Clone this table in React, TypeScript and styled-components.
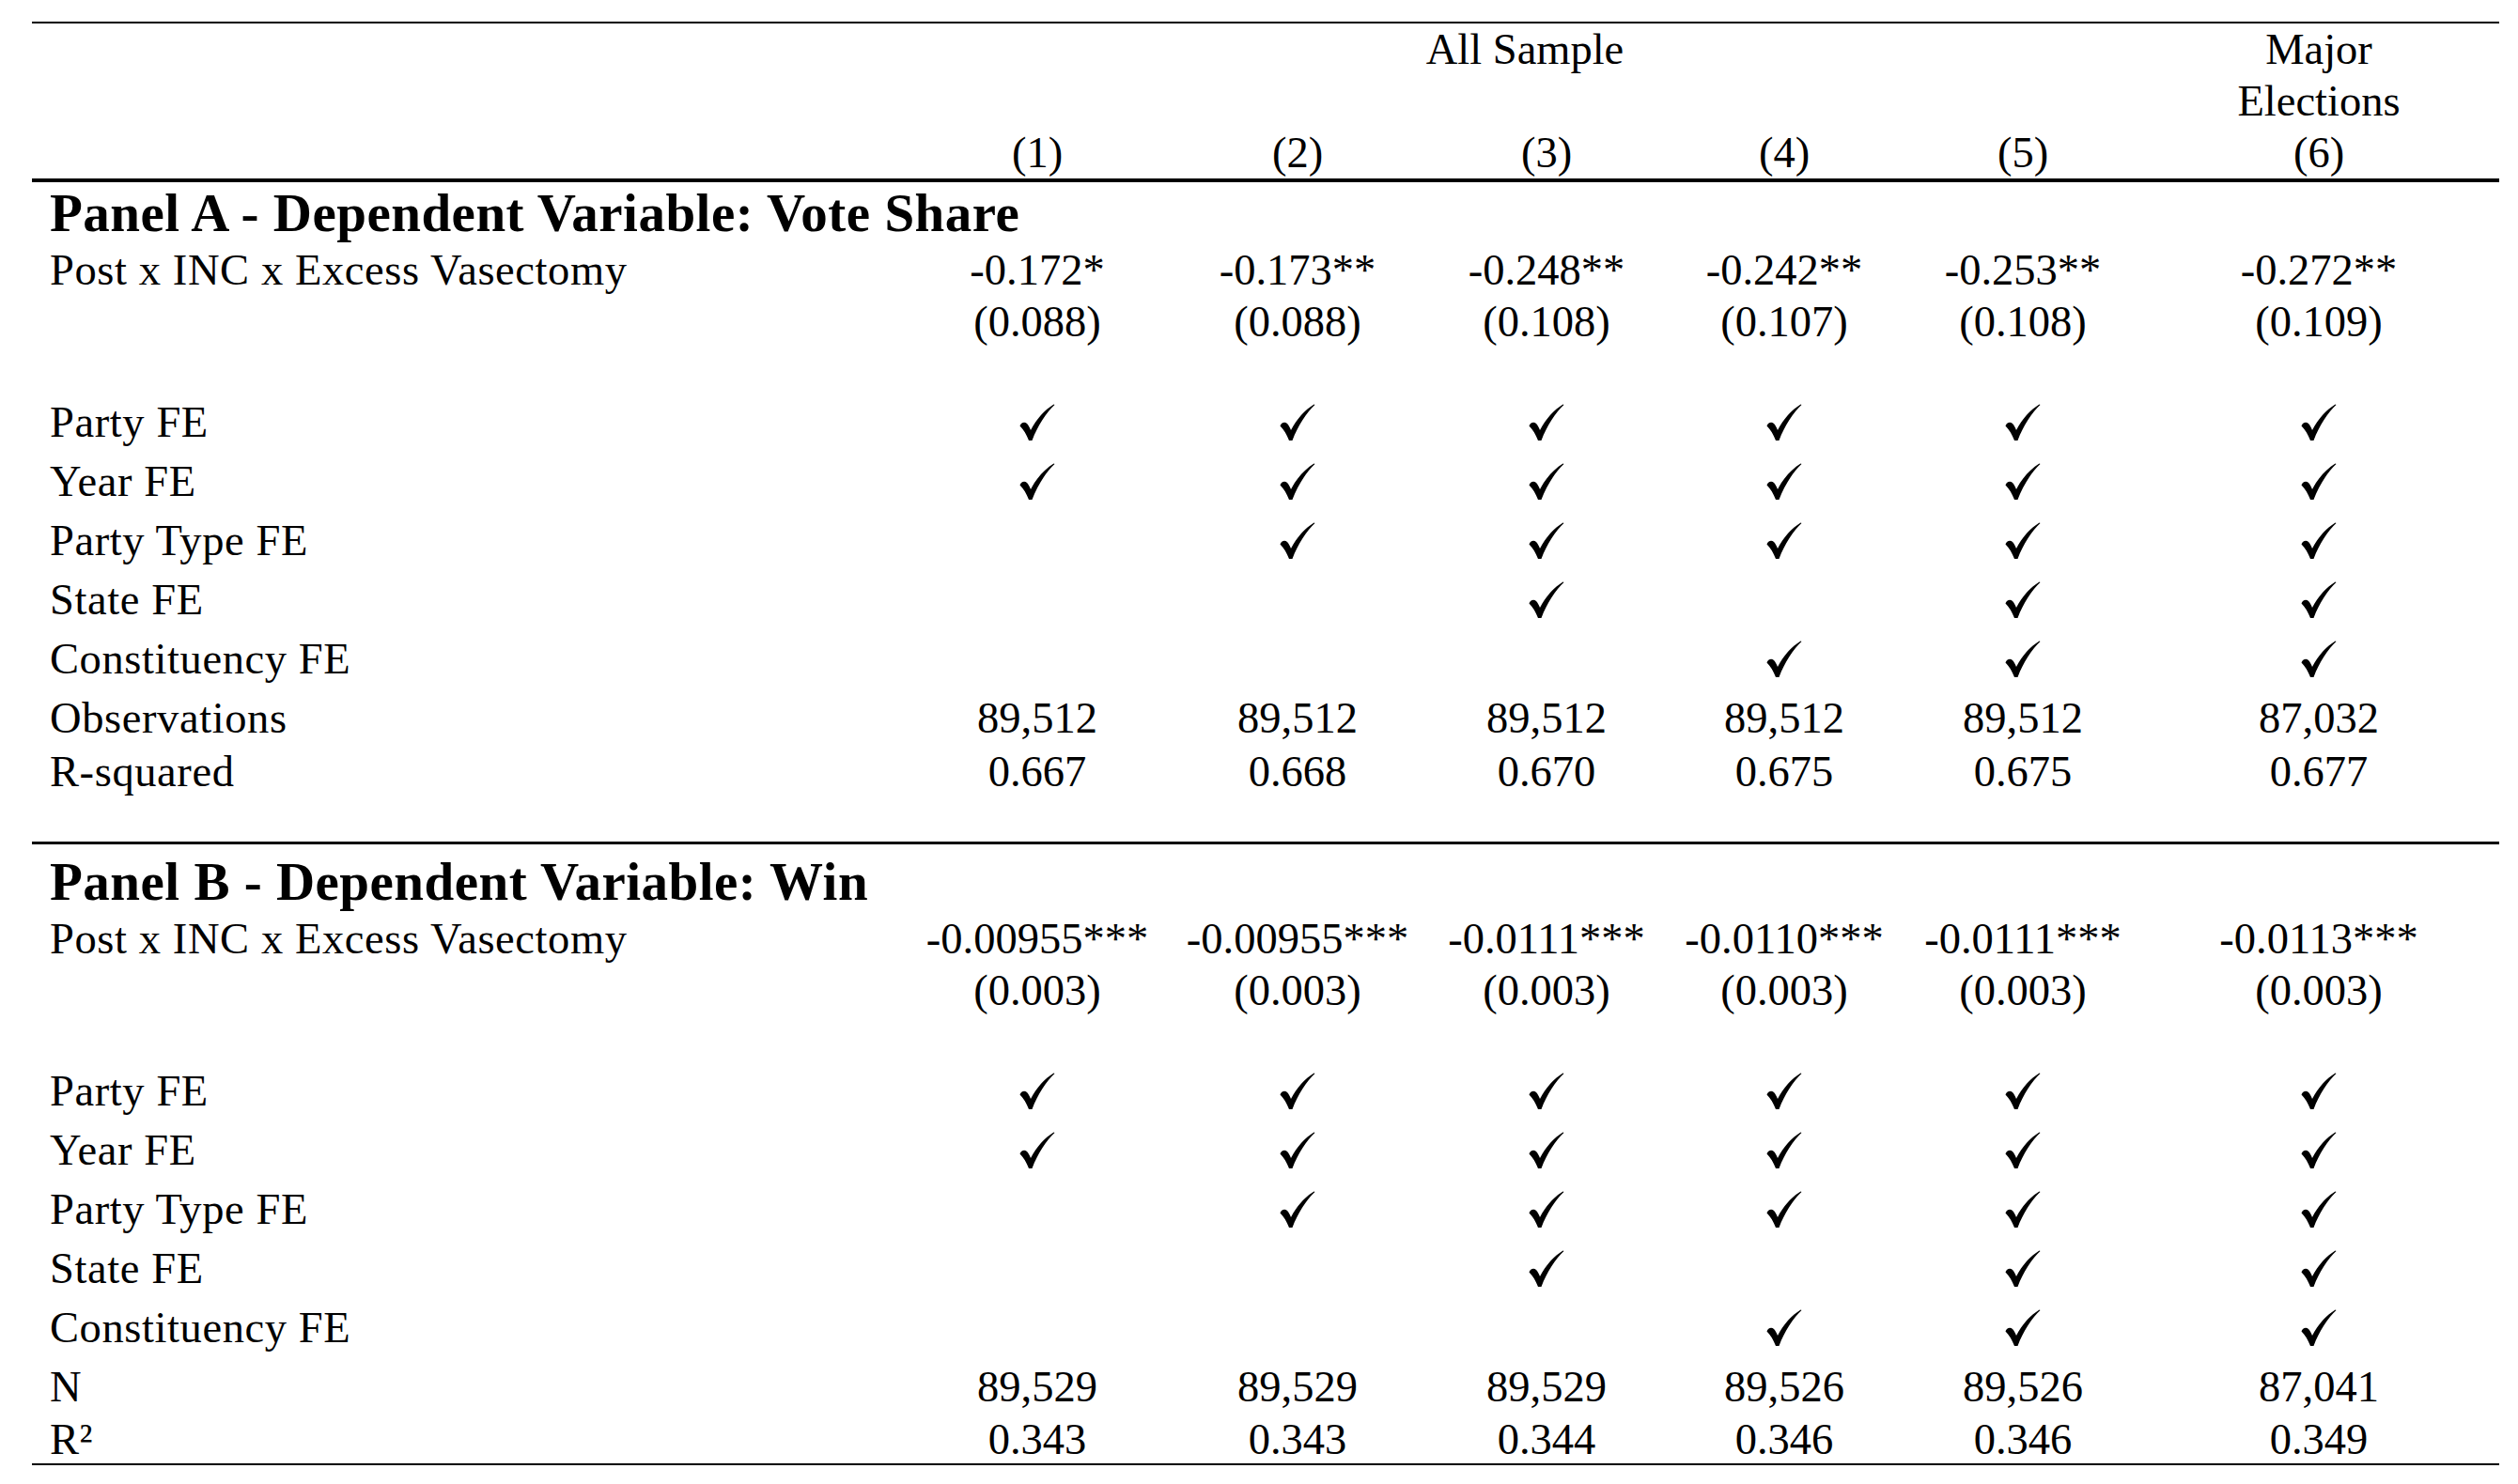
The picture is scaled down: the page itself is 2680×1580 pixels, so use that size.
import React from "react";
import styled, { createGlobalStyle, css } from "styled-components";

const COLUMNS = "936px 268px 286px 244px 262px 246px 384px";

type PanelData = {
    title: string;
    coef: string[];
    se: string[];
    nLabel: string;
    n: string[];
    r2Label: string;
    r2: string[];
};

const FIXED_EFFECTS: { label: string; cols: number[] }[] = [
    { label: "Party FE", cols: [1, 2, 3, 4, 5, 6] },
    { label: "Year FE", cols: [1, 2, 3, 4, 5, 6] },
    { label: "Party Type FE", cols: [2, 3, 4, 5, 6] },
    { label: "State FE", cols: [3, 5, 6] },
    { label: "Constituency FE", cols: [4, 5, 6] },
];

const PANELS: PanelData[] = [
    {
        title: "Panel A - Dependent Variable: Vote Share",
        coef: ["-0.172*", "-0.173**", "-0.248**", "-0.242**", "-0.253**", "-0.272**"],
        se: ["(0.088)", "(0.088)", "(0.108)", "(0.107)", "(0.108)", "(0.109)"],
        nLabel: "Observations",
        n: ["89,512", "89,512", "89,512", "89,512", "89,512", "87,032"],
        r2Label: "R-squared",
        r2: ["0.667", "0.668", "0.670", "0.675", "0.675", "0.677"],
    },
    {
        title: "Panel B - Dependent Variable: Win",
        coef: ["-0.00955***", "-0.00955***", "-0.0111***", "-0.0110***", "-0.0111***", "-0.0113***"],
        se: ["(0.003)", "(0.003)", "(0.003)", "(0.003)", "(0.003)", "(0.003)"],
        nLabel: "N",
        n: ["89,529", "89,529", "89,529", "89,526", "89,526", "87,041"],
        r2Label: "R²",
        r2: ["0.343", "0.343", "0.344", "0.346", "0.346", "0.349"],
    },
];

const COLS = [1, 2, 3, 4, 5, 6];

const Check = () => (
    <svg width="40" height="40" viewBox="0 0 40 40">
        <path
            d="M38.5 1 C30 9 20.5 23 14.5 39 L11 39 C8.5 32.5 5.5 27.5 1.5 23.5 C2.5 20 6.5 18.5 9 21 C10.5 22.5 11.8 25 13 28 C19.5 15.5 28 6.5 37.5 0.5 Z"
            fill="#000"
        />
    </svg>
);

const Panel: React.FC<{ data: PanelData; divided?: boolean; last?: boolean }> = ({ data, divided, last }) => (
    <PanelBody $divided={divided}>
        <PanelTitle>{data.title}</PanelTitle>
        <Row $h={55}>
            <Label>Post x INC x Excess Vasectomy</Label>
            {data.coef.map((v, i) => (
                <Value key={i}>{v}</Value>
            ))}
        </Row>
        <Row $h={55}>
            <Label />
            {data.se.map((v, i) => (
                <Value key={i}>{v}</Value>
            ))}
        </Row>
        <Gap $h={48} />
        {FIXED_EFFECTS.map(fe => (
            <Row key={fe.label} $h={63}>
                <Label>{fe.label}</Label>
                {COLS.map(c => (
                    <CheckCell key={c}>{fe.cols.includes(c) && <Check />}</CheckCell>
                ))}
            </Row>
        ))}
        <Row $h={63}>
            <Label>{data.nLabel}</Label>
            {data.n.map((v, i) => (
                <Value key={i}>{v}</Value>
            ))}
        </Row>
        <Row $h={last ? 50 : 52}>
            <Label>{data.r2Label}</Label>
            {data.r2.map((v, i) => (
                <Value key={i}>{v}</Value>
            ))}
        </Row>
        {!last && <Gap $h={48} />}
    </PanelBody>
);

export default function App() {
    return (
        <>
            <GlobalStyle />
            <Page>
                <Table>
                    <Header>
                        <HeaderCell $col="2 / 7" $row="1">
                            All Sample
                        </HeaderCell>
                        <HeaderCell $col="7" $row="1 / 3">
                            Major
                            <br />
                            Elections
                        </HeaderCell>
                        {COLS.map(c => (
                            <HeaderCell key={c} $col={String(c + 1)} $row="3">
                                ({c})
                            </HeaderCell>
                        ))}
                    </Header>
                    {PANELS.map((p, i) => (
                        <Panel key={p.title} data={p} divided={i > 0} last={i === PANELS.length - 1} />
                    ))}
                </Table>
            </Page>
        </>
    );
}

const GlobalStyle = createGlobalStyle`
    html, body {
        margin: 0;
        padding: 0;
        background: #ffffff;
    }
    body {
        font-family: "Liberation Serif", "Times New Roman", serif;
        color: #000000;
    }
`;

const Page = styled.div`
    padding: 23px 0 0 34px;
`;

const Table = styled.div`
    width: 2626px;
    border-top: 2px solid #000;
    border-bottom: 2px solid #000;
    font-size: 46.5px;
`;

const Header = styled.div`
    display: grid;
    grid-template-columns: ${COLUMNS};
    grid-template-rows: repeat(3, 55px);
    line-height: 55px;
    border-bottom: 4px solid #000;
`;

const HeaderCell = styled.div<{ $col: string; $row: string }>`
    grid-column: ${p => p.$col};
    grid-row: ${p => p.$row};
    text-align: center;
    white-space: nowrap;
`;

const PanelBody = styled.section<{ $divided?: boolean }>`
    ${p =>
        p.$divided &&
        css`
            border-top: 3px solid #000;
            padding-top: 7px;
        `}
`;

const PanelTitle = styled.div`
    height: 66px;
    line-height: 66px;
    padding-left: 19px;
    font-size: 57px;
    font-weight: bold;
    letter-spacing: 0.5px;
    white-space: nowrap;
`;

const Row = styled.div<{ $h: number }>`
    display: grid;
    grid-template-columns: ${COLUMNS};
    height: ${p => p.$h}px;
    line-height: ${p => p.$h}px;
`;

const Label = styled.div`
    padding-left: 19px;
    letter-spacing: 0.6px;
    white-space: nowrap;
`;

const Value = styled.div`
    text-align: center;
    white-space: nowrap;
`;

const CheckCell = styled.div`
    display: flex;
    align-items: center;
    justify-content: center;
`;

const Gap = styled.div<{ $h: number }>`
    height: ${p => p.$h}px;
`;
